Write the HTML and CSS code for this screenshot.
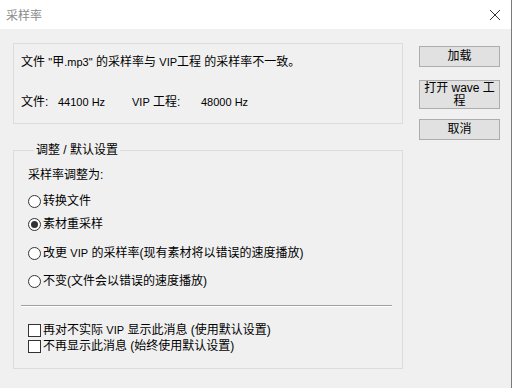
FILE: index.html
```html
<!DOCTYPE html>
<html lang="zh-CN">

<head>
    <meta charset="UTF-8">
    <title>采样率</title>
    <link rel="stylesheet" href="styles.css">
</head>

<body>
    <div class="window">
        <div class="titlebar">
            <span class="title">采样率</span>
            <svg class="close" width="12" height="12" viewBox="0 0 12 12">
                <path d="M1 1 L11 11 M11 1 L1 11" stroke="#333" stroke-width="1" fill="none" />
            </svg>
        </div>

        <div class="content">
            <div class="main">
                <div class="info">
                    <p class="msg">文件 <span class="lat">"</span>甲<span class="lat">.mp3"</span> 的采样率与 <span class="lat">VIP</span>工程 的采样率不一致。</p>
                    <div class="rates">
                        <span class="r1">文件:</span>
                        <span class="r2">44100 Hz</span>
                        <span class="r3"><span class="lat">VIP</span> 工程:</span>
                        <span class="r4">48000 Hz</span>
                    </div>
                </div>

                <fieldset class="group">
                    <legend>调整 / 默认设置</legend>
                    <div class="caption">采样率调整为:</div>
                    <label class="opt opt1"><span class="radio"></span><span>转换文件</span></label>
                    <label class="opt opt2"><span class="radio checked"></span><span>素材重采样</span></label>
                    <label class="opt opt3"><span class="radio"></span><span>改更 <span class="lat">VIP</span> 的采样率(现有素材将以错误的速度播放)</span></label>
                    <label class="opt opt4"><span class="radio"></span><span>不变(文件会以错误的速度播放)</span></label>
                    <div class="sep"></div>
                    <label class="opt chk1"><span class="check"></span><span>再对不实际 <span class="lat">VIP</span> 显示此消息 (使用默认设置)</span></label>
                    <label class="opt chk2"><span class="check"></span><span>不再显示此消息 (始终使用默认设置)</span></label>
                </fieldset>
            </div>

            <div class="buttons">
                <button class="btn">加载</button>
                <button class="btn tall">打开 wave 工<br>程</button>
                <button class="btn">取消</button>
            </div>
        </div>
    </div>
</body>

</html>
```

FILE: styles.css
```css
* {
    box-sizing: border-box;
}

body {
    margin: 0;
    font-family: "Liberation Sans", "Noto Sans CJK SC", sans-serif;
    font-size: 12px;
    color: #000;
}

.window {
    width: 512px;
    height: 388px;
    background-color: #f0f0f0;
    border-right: 1px solid #7a7a7a;
}

.titlebar {
    height: 29px;
    background-color: #fff;
    display: flex;
    align-items: center;
    justify-content: space-between;
    padding: 0 10px 0 6px;
}

.title {
    color: #8a8a8a;
    font-size: 12px;
}

.close {
    display: block;
}

.content {
    display: flex;
    padding: 14px 0 0 13px;
}

.main {
    width: 390px;
}

.info {
    height: 81px;
    border: 1px solid #dcdcdc;
    padding: 10px 7px 0;
}

.msg {
    margin: 0;
    line-height: 16px;
}

.lat {
    font-size: 11px;
}

.rates {
    display: flex;
    margin-top: 24px;
    line-height: 16px;
}

.r1 {
    width: 37px;
}

.r2 {
    width: 74px;
    font-size: 11px;
}

.r3 {
    width: 69px;
}

.r4 {
    font-size: 11px;
}

.group {
    margin: 18px 0 0;
    padding: 0 14px 14px;
    border: 1px solid #dcdcdc;
    display: flex;
    flex-direction: column;
    min-width: 0;
}

.group legend {
    margin-left: 6px;
    padding: 0 2px;
    line-height: 16px;
}

.caption {
    margin-top: 9px;
    line-height: 16px;
}

.opt {
    display: flex;
    align-items: center;
    line-height: 16px;
    gap: 2px;
}

.opt1 {
    margin-top: 10px;
}

.opt2 {
    margin-top: 7px;
}

.opt3 {
    margin-top: 13px;
}

.opt4 {
    margin-top: 12px;
}

.radio {
    width: 13px;
    height: 13px;
    border: 1px solid #333;
    border-radius: 50%;
    background-color: #fff;
    display: flex;
    align-items: center;
    justify-content: center;
}

.radio.checked::after {
    content: "";
    width: 7px;
    height: 7px;
    border-radius: 50%;
    background-color: #333;
}

.check {
    width: 13px;
    height: 13px;
    border: 1px solid #333;
    background-color: #fff;
}

.sep {
    margin: 16px 0 0 -7px;
    width: 371px;
    height: 2px;
    border-top: 1px solid #a0a0a0;
    border-bottom: 1px solid #fff;
}

.chk1 {
    margin-top: 15px;
}

.buttons {
    display: flex;
    flex-direction: column;
    margin: 3px 0 0 16px;
    gap: 13px;
}

.btn {
    width: 81px;
    height: 21px;
    border: 1px solid #adadad;
    background-color: #e1e1e1;
    font-family: "Liberation Sans", "Noto Sans CJK SC", sans-serif;
    font-size: 12px;
    color: #000;
    padding: 0;
    line-height: 13px;
}

.btn.tall {
    height: 29px;
}

.btn:last-child {
    margin-top: -3px;
}
```
